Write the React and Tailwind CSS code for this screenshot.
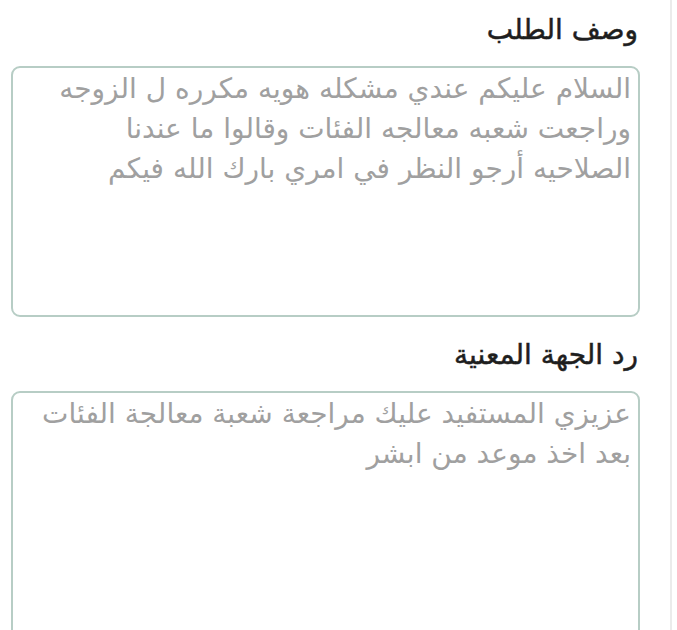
import React from 'react';

const fields = [
  {
    label: 'وصف الطلب',
    value:
      'السلام عليكم عندي مشكله هويه مكرره ل الزوجه\nوراجعت شعبه معالجه الفئات وقالوا ما عندنا\nالصلاحيه أرجو النظر في امري بارك الله فيكم',
  },
  {
    label: 'رد الجهة المعنية',
    value: 'عزيزي المستفيد عليك مراجعة شعبة معالجة الفئات\nبعد اخذ موعد من ابشر',
  },
];

export default function App() {
  return (
    <div className="w-[677px] h-[630px] overflow-hidden bg-white">
      <div
        dir="rtl"
        className="w-[672px] h-full border-r-2 border-[#ebebeb] pl-[11px] pr-[30px] pt-[12px] flex flex-col gap-[20px] font-['DejaVu_Sans',sans-serif]"
      >
        {fields.map((f) => (
          <div key={f.label} className="flex flex-col gap-[18px]">
            <label className="text-[28px] leading-[36px] font-normal text-[#1e1e1e] pr-[2px] [-webkit-text-stroke:0.5px_#1e1e1e]">
              {f.label}
            </label>
            <textarea
              readOnly
              value={f.value}
              className="w-full h-[251px] resize-none rounded-[9px] border-2 border-[#b7cdc5] px-[7px] py-[1px] text-[28px] leading-[40px] text-[#a0a0a0] bg-white outline-none overflow-hidden"
            />
          </div>
        ))}
      </div>
    </div>
  );
}
